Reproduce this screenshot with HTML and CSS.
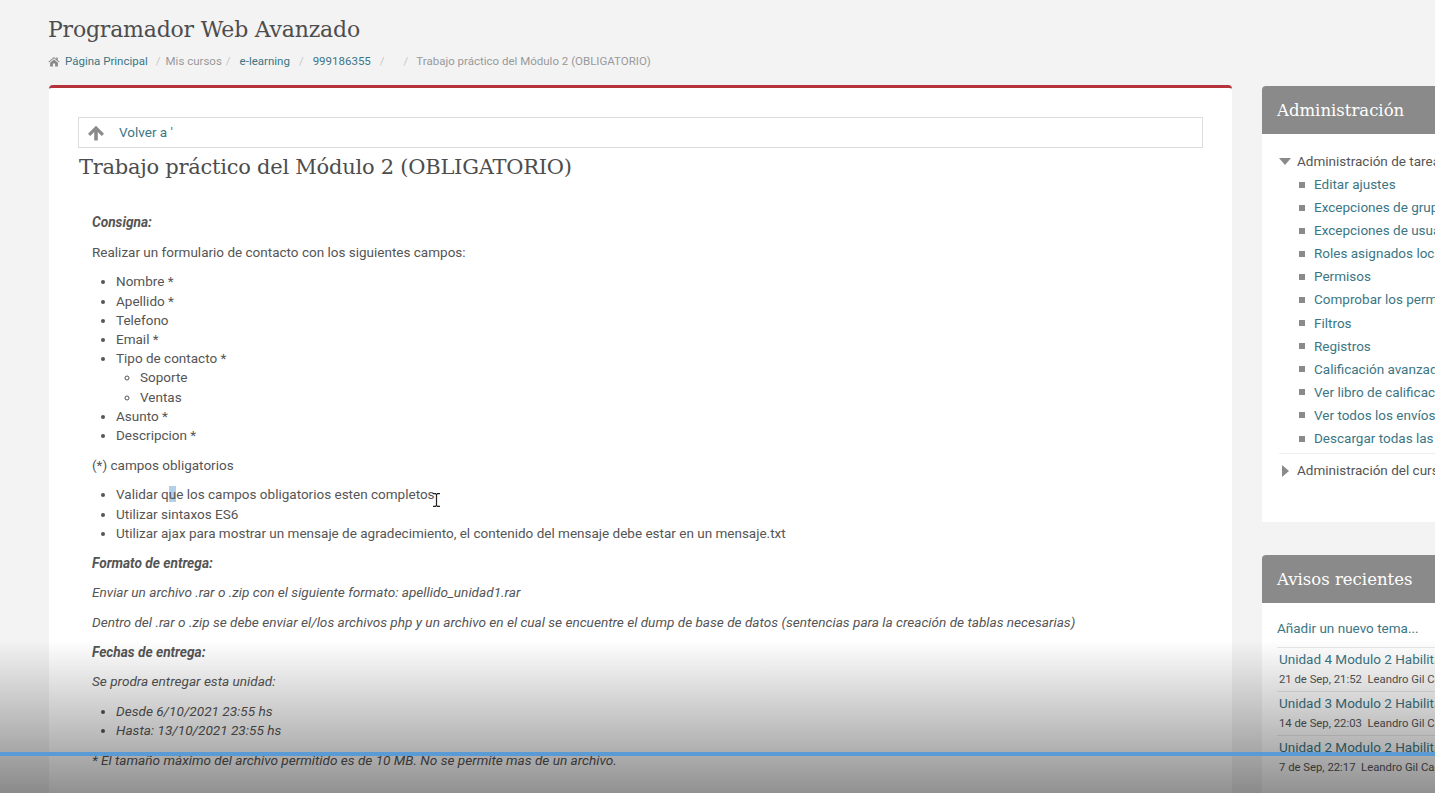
FILE: index.html
```html
<!DOCTYPE html>
<html lang="es">
<head>
  <meta charset="UTF-8">
  <title>Trabajo práctico del Módulo 2</title>
  <link rel="stylesheet" href="styles.css">
</head>
<body>
  <header class="page-header">
    <h1>Programador Web Avanzado</h1>
    <nav class="breadcrumb">
      <svg class="home-icon" viewBox="0 0 16 14"><path d="M8 1 .5 7.400l.8.9L8 2.700l6.700 5.600.8-.9L13 5.300V1.500h-2v2.100zM2.800 8.600V13.500h3.700V9.800h3V13.500h3.700V8.600L8 4.300z"/></svg>
      <a href="#">Página Principal</a>
      <span class="sep sep-first">/</span>
      <span class="plain">Mis cursos</span>
      <span class="sep">/</span>
      <a href="#" class="gap-left">e-learning</a>
      <span class="sep sep-wide">/</span>
      <a href="#">999186355</a>
      <span class="sep sep-wide">/</span>
      <span class="sep sep-empty">/</span>
      <span class="plain">Trabajo práctico del Módulo 2 (OBLIGATORIO)</span>
    </nav>
  </header>

  <div class="columns">
    <main class="card">
      <div class="back-box">
        <svg class="up-icon" viewBox="0 0 16 16"><path d="M8 .8 0 8.800l2.300 2.200 3.900-3.900V15.500h3.600V7.100l3.900 3.900L16 8.800z"/></svg>
        <a href="#">Volver a '</a>
      </div>
      <h2>Trabajo práctico del Módulo 2 (OBLIGATORIO)</h2>

      <div class="content">
        <p><strong><em>Consigna:</em></strong></p>
        <p>Realizar un formulario de contacto con los siguientes campos:</p>
        <ul>
          <li>Nombre *</li>
          <li>Apellido *</li>
          <li>Telefono</li>
          <li>Email *</li>
          <li>Tipo de contacto *
            <ul>
              <li>Soporte</li>
              <li>Ventas</li>
            </ul>
          </li>
          <li>Asunto *</li>
          <li>Descripcion *</li>
        </ul>
        <p>(*) campos obligatorios</p>
        <ul>
          <li>Validar q<span class="selected">u</span>e los campos obligatorios esten completos</li>
          <li>Utilizar sintaxos ES6</li>
          <li>Utilizar ajax para mostrar un mensaje de agradecimiento, el contenido del mensaje debe estar en un mensaje.txt</li>
        </ul>
        <p><strong><em>Formato de entrega:</em></strong></p>
        <p><em>Enviar un archivo .rar o .zip con el siguiente formato: apellido_unidad1.rar</em></p>
        <p><em>Dentro del .rar o .zip se debe enviar el/los archivos php y un archivo en el cual se encuentre el dump de base de datos (sentencias para la creación de tablas necesarias)</em></p>
        <p><strong><em>Fechas de entrega:</em></strong></p>
        <p><em>Se prodra entregar esta unidad:</em></p>
        <ul>
          <li><em>Desde 6/10/2021 23:55 hs</em></li>
          <li><em>Hasta: 13/10/2021 23:55 hs</em></li>
        </ul>
        <p><em>* El tamaño máximo del archivo permitido es de 10 MB. No se permite mas de un archivo.</em></p>
      </div>
    </main>

    <aside class="sidebar">
      <section class="block block-admin">
        <h3>Administración</h3>
        <div class="block-body">
          <div class="tree-head"><span class="arrow-down"></span>Administración de tareas</div>
          <ul class="tree">
            <li><a href="#">Editar ajustes</a></li>
            <li><a href="#">Excepciones de grupo</a></li>
            <li><a href="#">Excepciones de usuario</a></li>
            <li><a href="#">Roles asignados localmente</a></li>
            <li><a href="#">Permisos</a></li>
            <li><a href="#">Comprobar los permisos</a></li>
            <li><a href="#">Filtros</a></li>
            <li><a href="#">Registros</a></li>
            <li><a href="#">Calificación avanzada</a></li>
            <li><a href="#">Ver libro de calificaciones</a></li>
            <li><a href="#">Ver todos los envíos</a></li>
            <li><a href="#">Descargar todas las entregas</a></li>
          </ul>
          <div class="tree-head tree-closed"><span class="arrow-right"></span>Administración del curso</div>
        </div>
      </section>

      <section class="block block-news">
        <h3>Avisos recientes</h3>
        <div class="block-body news">
          <a href="#" class="add-topic">Añadir un nuevo tema...</a>
          <div class="post">
            <a href="#">Unidad 4 Modulo 2 Habilitada</a>
            <div class="post-info">21 de Sep, 21:52 &nbsp;Leandro Gil Carrano</div>
          </div>
          <div class="post">
            <a href="#">Unidad 3 Modulo 2 Habilitada</a>
            <div class="post-info">14 de Sep, 22:03 &nbsp;Leandro Gil Carrano</div>
          </div>
          <div class="post post-end">
            <a href="#">Unidad 2 Modulo 2 Habilitada</a>
            <div class="post-info">7 de Sep, 22:17 &nbsp;Leandro Gil Carrano</div>
          </div>
        </div>
      </section>
    </aside>
  </div>

  <svg class="text-cursor" viewBox="0 0 9 14"><path d="M1 .7h2.500L4.500 1.700 5.500.7H8M4.500 1.700V12.300M1 13.300h2.500l1-1 1 1H8" fill="none" stroke="#222" stroke-width="1.200"/></svg>
  <div class="video-fade"></div>
  <div class="video-progress"></div>
</body>
</html>
```

FILE: styles.css
```css
body {
  margin: 0;
  height: 793px;
  overflow: hidden;
  position: relative;
  background: #f3f3f4;
  color: #555;
  font-family: Roboto, "Liberation Sans", sans-serif;
  font-size: 13.5px;
  line-height: 19.2px;
}
a {
  color: #3b7685;
  text-decoration: none;
}

.page-header {
  padding: 15px 0 0 48px;
  height: 85px;
  box-sizing: border-box;
}
h1 {
  margin: 0;
  color: #4d4d4d;
  font-family: "DejaVu Serif", serif;
  font-weight: 400;
  font-size: 22px;
  line-height: 30px;
  letter-spacing: -.2px;
}
.breadcrumb {
  display: flex;
  align-items: center;
  margin-top: 7px;
  height: 20px;
  font-size: 11.5px;
  color: #999;
}
.home-icon {
  width: 12px;
  height: 11px;
  fill: #888;
  margin: -2px 5px 0 0;
}
.sep {
  color: #c8c8c8;
  margin: 0 4px;
}
.sep-first {
  margin: 0 5px 0 8px;
}
.sep-wide {
  margin: 0 9px;
}
.sep-empty {
  margin: 0 8px 0 10px;
}
.gap-left {
  margin-left: 5px;
}

.columns {
  display: flex;
  align-items: flex-start;
  padding-left: 49px;
}
.card {
  flex: none;
  width: 1183px;
  height: 708px;
  box-sizing: border-box;
  background: #fff;
  border-top: 3px solid #b5333a;
  border-radius: 4px 4px 0 0;
  padding: 29px 29px 0;
}
.back-box {
  display: flex;
  align-items: center;
  height: 29px;
  border: 1px solid #dcdcdc;
  padding-left: 9px;
}
.up-icon {
  width: 16px;
  height: 16px;
  fill: #8a8a8a;
  margin-right: 15px;
}
h2 {
  margin: 5px 0 0 1px;
  color: #4d4d4d;
  font-family: "DejaVu Serif", serif;
  font-weight: 400;
  font-size: 21px;
  line-height: 29px;
  letter-spacing: -.25px;
}
.content {
  padding: 31px 0 0 14px;
}
.content p {
  margin: 0 0 10.500px;
}
.content ul {
  margin: 0 0 10.500px;
  padding-left: 24px;
}
.content ul ul {
  margin: 0;
}
.content em {
  font-size: 13.6px;
}
.content strong em {
  font-size: 13.700px;
}
.selected {
  background: #b4cfe8;
}

.sidebar {
  flex: none;
  width: 260px;
  margin: 1px 0 0 30px;
}
.block {
  background: #fff;
  border-radius: 4px 4px 0 0;
  margin-bottom: 33px;
  overflow: hidden;
}
.block-admin {
  height: 436px;
}
.block-news {
  height: 238px;
}
.block h3 {
  margin: 0;
  height: 48px;
  box-sizing: border-box;
  padding: 0 15px;
  background: #8a8a8a;
  color: #fff;
  font-family: "DejaVu Serif", serif;
  font-weight: 400;
  font-size: 16.500px;
  line-height: 50px;
  white-space: nowrap;
}
.block-body {
  padding: 16px 0 0 17px;
  white-space: nowrap;
}
.tree-head {
  display: flex;
  align-items: center;
  height: 23px;
  color: #555;
}
.arrow-down {
  width: 0;
  height: 0;
  border: 6px solid transparent;
  border-top: 7px solid #8a8a8a;
  border-bottom: 0;
  margin-right: 6px;
}
.arrow-right {
  width: 0;
  height: 0;
  border: 6px solid transparent;
  border-left: 7px solid #8a8a8a;
  border-right: 0;
  margin: 0 8px 0 3px;
}
.tree {
  list-style: none;
  margin: 0;
  padding: 0 0 0 20px;
}
.tree li {
  display: flex;
  align-items: center;
  height: 23.100px;
}
.tree li::before {
  content: "";
  width: 6px;
  height: 6px;
  background: #8a8a8a;
  margin-right: 9px;
}
.tree-closed {
  margin-top: 3px;
  padding-top: 5px;
  border-top: 1px solid #eee;
}
.news {
  padding: 16px 0 0 15px;
}
.add-topic {
  display: block;
  height: 28px;
  border-bottom: 1px solid #e8e8e8;
}
.post {
  padding: 2px 0 0 2px;
  height: 41px;
  border-bottom: 1px solid #e8e8e8;
}
.post-end {
  border-bottom: 0;
}
.post-info {
  font-size: 11.300px;
  line-height: 21px;
}

.text-cursor {
  position: absolute;
  left: 432px;
  top: 493px;
  width: 9px;
  height: 14px;
}
.video-fade {
  position: absolute;
  left: 0;
  right: 0;
  bottom: 0;
  height: 153px;
  background: linear-gradient(rgba(0,0,0,0), rgba(0,0,0,.43));
}
.video-progress {
  position: absolute;
  left: 0;
  right: 0;
  top: 752px;
  height: 4px;
  background: #5b9bd5;
}
```
